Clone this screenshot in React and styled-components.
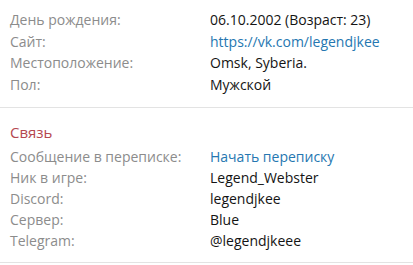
import { Fragment } from "react";
import styled, { createGlobalStyle } from "styled-components";

const Global = createGlobalStyle`
  body {
    margin: 0;
    background: #fff;
    font-family: "Open Sans", "Noto Sans", sans-serif;
  }
`;

const Block = styled.div`
  padding: ${props => props.$top}px 10px ${props => props.$bottom}px;
  border-bottom: 1px solid #e3e3e3;
`;

const Heading = styled.h3`
  margin: 0 0 3px;
  font-size: 15px;
  font-weight: 400;
  line-height: 22px;
  color: #b5484f;
`;

const Pairs = styled.dl`
  display: grid;
  grid-template-columns: 200px 1fr;
  margin: 0;
  font-size: 14px;
  line-height: ${props => props.$line}px;
`;

const Term = styled.dt`
  color: #8c8c8c;
`;

const Value = styled.dd`
  margin: 0;
  color: ${props => props.$link ? "#2577b1" : "#141414"};
`;

const profile = [
  ["День рождения:", "06.10.2002 (Возраст: 23)"],
  ["Сайт:", "https://vk.com/legendjkee", true],
  ["Местоположение:", "Omsk, Syberia."],
  ["Пол:", "Мужской"],
];

const contacts = [
  ["Сообщение в переписке:", "Начать переписку", true],
  ["Ник в игре:", "Legend_Webster"],
  ["Discord:", "legendjkee"],
  ["Сервер:", "Blue"],
  ["Telegram:", "@legendjkeee"],
];

function PairList({ items, line }) {
  return (
    <Pairs $line={line}>
      {items.map(([term, value, link]) => (
        <Fragment key={term}>
          <Term>{term}</Term>
          <Value $link={link}>{value}</Value>
        </Fragment>
      ))}
    </Pairs>
  );
}

export default function App() {
  return (
    <>
      <Global />
      <Block $top={9} $bottom={12}>
        <PairList items={profile} line={21.5} />
      </Block>
      <Block $top={13} $bottom={11}>
        <Heading>Связь</Heading>
        <PairList items={contacts} line={21} />
      </Block>
    </>
  );
}
